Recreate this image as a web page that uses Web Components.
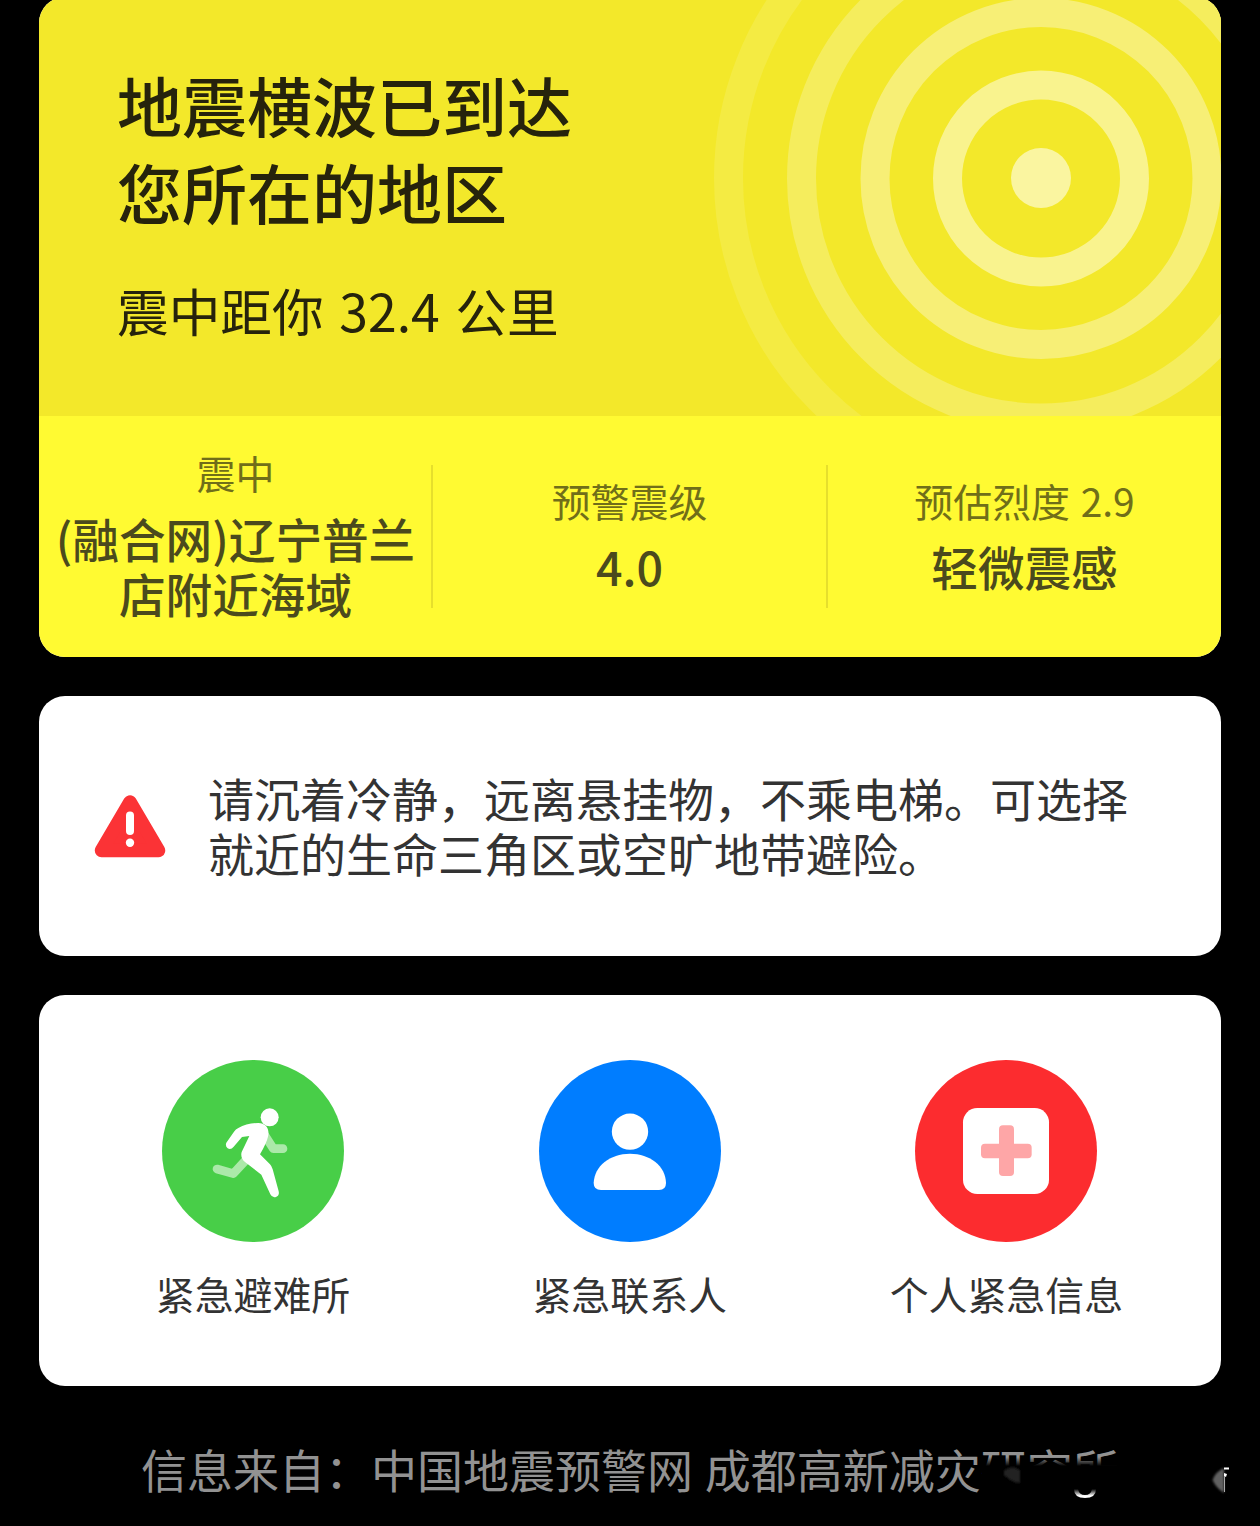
<!DOCTYPE html>
<html lang="zh-CN">
<head>
<meta charset="utf-8">
<title>地震预警</title>
<style>
html{background:#000}
body{margin:0;background:#000;overflow:hidden;font-family:"Noto Sans CJK SC",sans-serif;color:#333}
</style>
</head>
<body>
<quake-screen></quake-screen>
<script>
const define = (name, html) => {
  const t = document.createElement('template');
  t.innerHTML = html;
  customElements.define(name, class extends HTMLElement {
    constructor() {
      super();
      this.attachShadow({ mode: 'open' }).append(t.content.cloneNode(true));
    }
  });
};

define('wave-rings', `
<style>:host{display:block;width:100%;height:100%}svg{display:block}</style>
<svg width="1182" height="419" viewBox="39 -3 1182 419" fill="none" stroke-width="29">
  <circle cx="1041" cy="178" r="312.5" stroke="#f4eb43"/>
  <circle cx="1041" cy="178.500" r="239.500" stroke="#f5ed5d"/>
  <circle cx="1041" cy="178.500" r="166" stroke="#f7ef76"/>
  <circle cx="1041" cy="178.500" r="93.500" stroke="#f9f38e"/>
  <circle cx="1041" cy="178" r="30" fill="#faf5a0"/>
</svg>`);

define('alert-hero', `
<style>
:host{display:grid;height:419px;background:#f3e82a;color:#26230c;overflow:hidden}
wave-rings,.copy{grid-area:1/1}
.copy{padding:64px 0 0 78px;display:flex;flex-direction:column;gap:38px}
.title{font-size:65px;line-height:86.500px;font-weight:500}
.distance{font-size:51.700px;line-height:76px;word-spacing:4px}
</style>
<wave-rings></wave-rings>
<div class="copy">
  <div class="title"><slot name="title"></slot></div>
  <div class="distance"><slot name="distance"></slot></div>
</div>`);

define('stat-cell', `
<style>
:host{display:flex;flex:1;flex-direction:column;align-items:center;justify-content:center;gap:15px;text-align:center;white-space:nowrap}
.label{font-size:38.900px;line-height:45px;color:#706e19;word-spacing:2px}
.value{font-size:46.600px;line-height:55px;font-weight:500;color:#4b4a1d}
</style>
<div class="label"><slot name="label"></slot></div>
<div class="value"><slot></slot></div>`);

define('stat-row', `
<style>
:host{display:flex;align-items:stretch;height:241px;box-sizing:border-box;background:#fffa32;padding-bottom:2px}
::slotted(stat-cell:not(:last-child)){background:linear-gradient(#e6df2c,#e6df2c) right 0 top 49px/2px 143px no-repeat}
::slotted(stat-cell:first-child){flex:0 0 394px;box-sizing:border-box;padding:0 1px 2px 0}
::slotted(stat-cell:nth-child(2)){flex:0 0 395px;box-sizing:border-box;padding-right:2px}
</style>
<slot></slot>`);

define('alert-card', `
<style>:host{display:block;border-radius:26px;overflow:hidden;background:#fff}</style>
<slot></slot>`);

define('advice-row', `
<style>
:host{display:flex;align-items:center;height:260px;padding-left:55px;gap:42px;box-sizing:border-box}
svg{display:block;flex:none}
.text{font-size:46px;line-height:54.500px;color:#333;white-space:nowrap;padding-bottom:3px}
</style>
<svg width="72" height="66" viewBox="94 793 72 66">
  <path d="M130 802L158.500 850.500H101.500Z" fill="#fb3336" stroke="#fb3336" stroke-width="13.500" stroke-linejoin="round"/>
  <path d="M130 815.500V831" stroke="#fff" stroke-width="8" stroke-linecap="round"/>
  <circle cx="130" cy="842.700" r="4.200" fill="#fff"/>
</svg>
<div class="text"><slot></slot></div>`);

define('icon-shelter', `
<style>:host,svg{display:block}</style>
<svg width="182" height="182" viewBox="36 30 546 546">
  <circle cx="309" cy="303" r="273" fill="#48ce48"/>
  <g fill="none" stroke="#abe9a9" stroke-width="26" stroke-linecap="round" stroke-linejoin="round">
    <path d="M345 257L370 296H399"/>
    <path d="M285 333L250 371L201 357"/>
  </g>
  <circle cx="359" cy="202" r="27" fill="#fff"/>
  <path d="M265 234Q290 220 325 219C348 219 360 238 354 260Q350 278 330 313L360 343Q365 348 368 358L386 424Q389 437 378 441Q366 444 361 433L334 374L286 337Q270 323 275 306L298 258L276 261L251 290Q243 300 233 295Q225 288 229 278L252 245Q257 238 265 234Z" fill="#fff"/>
</svg>`);

define('icon-contact', `
<style>:host,svg{display:block}</style>
<svg width="182" height="182" viewBox="24 30 546 546">
  <circle cx="297" cy="303" r="273" fill="#007dff"/>
  <circle cx="297" cy="245" r="54.500" fill="#fff"/>
  <path d="M188 399C190 348 237 311 297 311S404 348 405 399Q405 420 384 420H210Q188 420 188 399Z" fill="#fff"/>
</svg>`);

define('icon-medical', `
<style>:host,svg{display:block}</style>
<svg width="182" height="182" viewBox="30 30 546 546">
  <circle cx="303" cy="303" r="273" fill="#fc2c2f"/>
  <rect x="174" y="174" width="258" height="258" rx="43" fill="#fff"/>
  <g fill="#fea6a7"><rect x="282" y="226" width="45" height="152" rx="12"/><rect x="228" y="281" width="152" height="44" rx="12"/></g>
</svg>`);

define('action-button', `
<style>
:host{display:flex;flex:1;flex-direction:column;align-items:center;gap:25px}
.label{font-size:38.900px;line-height:52px;color:#333;white-space:nowrap}
</style>
<slot name="icon"></slot>
<div class="label"><slot></slot></div>`);

define('action-row', `
<style>:host{display:flex;height:391px;box-sizing:border-box;padding:65px 26.300px 0 25.700px}</style>
<slot></slot>`);

define('source-footer', `
<style>
:host{display:block;position:relative;height:140px;color:#929292;font-size:46px;line-height:60px;white-space:nowrap}
.text{padding:52px 0 0 141px;word-spacing:1.500px}
svg{position:absolute;left:970px;top:54px}
</style>
<div class="text"><slot></slot></div>
<svg width="290" height="86" viewBox="970 1440 290 86">
  <defs>
    <linearGradient id="fade" x2="0" y2="1"><stop stop-color="#000" stop-opacity="0"/><stop offset=".2" stop-color="#000"/></linearGradient>
    <linearGradient id="arc" x2="0" y2="1"><stop stop-color="#fff" stop-opacity="0"/><stop offset=".75" stop-color="#fff"/></linearGradient>
    <filter id="soft" x="-30%" y="-30%" width="160%" height="160%"><feGaussianBlur stdDeviation="1.3"/></filter>
  </defs>
  <rect x="982" y="1457" width="150" height="45" fill="url(#fade)"/>
  <path d="M1004 1471Q1012 1464 1020 1470V1483Q1014 1484 1004 1475Z" fill="#222" filter="url(#soft)"/>
  <path d="M1074 1489Q1074 1498 1085 1498Q1096 1498 1096 1489H1092Q1091 1495 1085 1495T1078 1489Z" fill="url(#arc)"/>
  <path d="M1224 1468Q1215 1472 1212.500 1480Q1216 1488 1224 1493Z" fill="#606060" filter="url(#soft)"/>
  <path d="M1224 1467.500H1229V1469.500H1224ZM1224 1473L1227 1474L1226 1477L1224 1476Z" fill="#fff"/>
  <path d="M1224.500 1476V1492" stroke="#aaa"/>
</svg>`);

define('quake-screen', `
<style>
:host{display:flex;flex-direction:column;gap:39px;width:1182px;height:1526px;margin:-3px auto 0;overflow:visible}
source-footer{margin:-39px -39px 0}
alert-card{flex:none}
</style>
<alert-card>
  <alert-hero><span slot="title">地震横波已到达<br>您所在的地区</span><span slot="distance">震中距你 32.4 公里</span></alert-hero>
  <stat-row>
    <stat-cell><span slot="label">震中</span>(融合网)辽宁普兰<br>店附近海域</stat-cell>
    <stat-cell><span slot="label">预警震级</span>4.0</stat-cell>
    <stat-cell><span slot="label">预估烈度 2.9</span>轻微震感</stat-cell>
  </stat-row>
</alert-card>
<alert-card><advice-row>请沉着冷静，远离悬挂物，不乘电梯。可选择<br>就近的生命三角区或空旷地带避险。</advice-row></alert-card>
<alert-card>
  <action-row>
    <action-button><icon-shelter slot="icon"></icon-shelter>紧急避难所</action-button>
    <action-button><icon-contact slot="icon"></icon-contact>紧急联系人</action-button>
    <action-button><icon-medical slot="icon"></icon-medical>个人紧急信息</action-button>
  </action-row>
</alert-card>
<source-footer>信息来自：中国地震预警网 成都高新减灾研究所</source-footer>`);
</script>
</body>
</html>
